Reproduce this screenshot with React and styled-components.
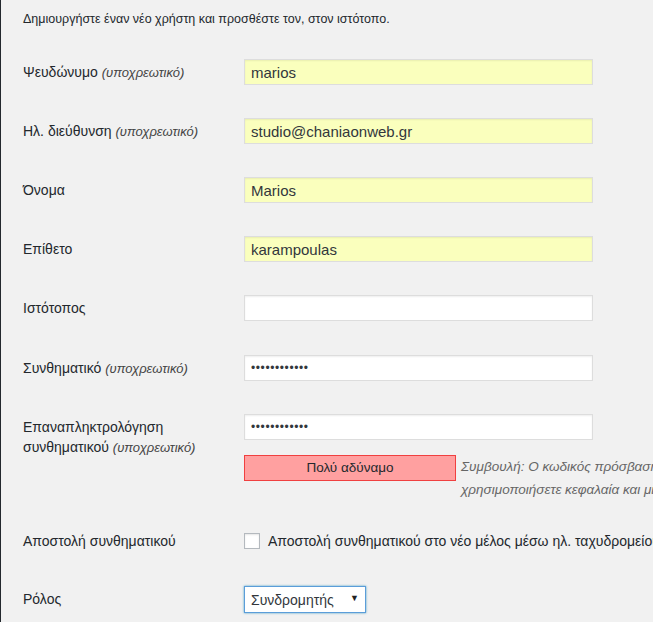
import React from 'react'
import styled, { createGlobalStyle } from 'styled-components'

const GlobalStyle = createGlobalStyle`
  html, body {
    margin: 0;
    padding: 0;
    overflow: hidden;
    background: #f1f1f1;
  }
  body {
    font-family: "Liberation Sans", Arial, sans-serif;
    color: #23282d;
  }
`

const Page = styled.div`
  min-height: 622px;
  border-left: 1px solid #23282d;
  padding-left: 22px;
  box-sizing: border-box;
`

const Intro = styled.p`
  margin: 0;
  padding-top: 10px;
  font-size: 12.5px;
  line-height: 19px;
  white-space: nowrap;
`

const Form = styled.div`
  margin-top: 13px;
`

const Row = styled.div`
  display: grid;
  grid-template-columns: 221px 1fr;
  align-items: start;
  padding-top: ${p => p.$top ?? 17}px;
  padding-bottom: ${p => p.$bottom ?? 16}px;
`

const Label = styled.div`
  font-size: 14px;
  line-height: ${p => (p.$multi ? '20px' : '26px')};
  padding-top: ${p => (p.$multi ? '3px' : '0')};
`

const Required = styled.span`
  font-size: 13px;
  line-height: 1;
  font-style: italic;
  color: #444;
`

const Field = styled.div`
  display: flex;
  flex-direction: column;
  min-width: 0;
`

const TextInput = styled.input`
  box-sizing: border-box;
  width: 349px;
  height: 26px;
  margin: 0;
  padding: 0 6px;
  border: 1px solid #ddd;
  box-shadow: inset 0 1px 2px rgba(0, 0, 0, 0.07);
  background: ${p => (p.$filled ? '#faffbd' : '#fff')};
  color: #32373c;
  font-family: inherit;
  font-size: ${p => (p.type === 'password' ? '12px' : '15px')};
  letter-spacing: ${p => (p.type === 'password' ? '0.6px' : '0')};
  outline: none;
`

const StrengthRow = styled.div`
  display: flex;
  align-items: flex-start;
  margin-top: 15px;
`

const Strength = styled.div`
  box-sizing: border-box;
  flex: none;
  width: 212px;
  height: 26px;
  line-height: 24px;
  text-align: center;
  font-size: 13.5px;
  background: #ffa0a0;
  border: 1px solid #f04040;
  color: #23282d;
`

const Hint = styled.p`
  margin: 0 0 0 5px;
  font-size: 13.5px;
  font-style: italic;
  line-height: 23px;
  color: #666;
  white-space: nowrap;
`

const CheckLine = styled.label`
  display: flex;
  align-items: center;
  gap: 8px;
  height: 26px;
  font-size: 14px;
  white-space: nowrap;
`

const Check = styled.input`
  appearance: none;
  flex: none;
  box-sizing: border-box;
  width: 16px;
  height: 16px;
  margin: 0;
  border: 1px solid #b4b9be;
  background: #fff;
  box-shadow: inset 0 1px 2px rgba(0, 0, 0, 0.1);
`

const SelectWrap = styled.div`
  position: relative;
  width: 122px;
  height: 27px;
`

const Select = styled.select`
  appearance: none;
  box-sizing: border-box;
  width: 100%;
  height: 100%;
  margin: 0;
  padding: 0 6px;
  border: 1px solid #5b9dd9;
  box-shadow: 0 0 2px rgba(30, 140, 190, 0.8);
  background: #fff;
  color: #32373c;
  font-family: inherit;
  font-size: 14px;
  outline: none;
`

const Arrow = styled.span`
  position: absolute;
  right: 7px;
  top: 7px;
  font-size: 9px;
  color: #222;
  pointer-events: none;
`

const fields = [
  { label: 'Ψευδώνυμο', required: true, value: 'marios' },
  { label: 'Ηλ. διεύθυνση', required: true, value: 'studio@chaniaonweb.gr' },
  { label: 'Όνομα', value: 'Marios' },
  { label: 'Επίθετο', value: 'karampoulas' },
  { label: 'Ιστότοπος', value: '' },
]

export default function App() {
  return (
    <>
      <GlobalStyle />
      <Page>
        <Intro>Δημιουργήστε έναν νέο χρήστη και προσθέστε τον, στον ιστότοπο.</Intro>
        <Form>
          {fields.map(f => (
            <Row key={f.label}>
              <Label>
                {f.label}
                {f.required && <> <Required>(υποχρεωτικό)</Required></>}
              </Label>
              <Field>
                <TextInput type="text" defaultValue={f.value} $filled={!!f.value} />
              </Field>
            </Row>
          ))}
          <Row $top={18}>
            <Label>
              Συνθηματικό <Required>(υποχρεωτικό)</Required>
            </Label>
            <Field>
              <TextInput type="password" defaultValue="abcdefghijkl" />
            </Field>
          </Row>
          <Row $bottom={10}>
            <Label $multi>
              Επαναπληκτρολόγηση
              <br />
              συνθηματικού <Required>(υποχρεωτικό)</Required>
            </Label>
            <Field>
              <TextInput type="password" defaultValue="abcdefghijkl" />
              <StrengthRow>
                <Strength>Πολύ αδύναμο</Strength>
                <Hint>
                  Συμβουλή: Ο κωδικός πρόσβασης θα πρέπει να είναι τουλάχιστον επτά χαρακτήρες. Για να τον κάνετε ισχυρότερο,
                  <br />
                  χρησιμοποιήσετε κεφαλαία και μικρά γράμματα, αριθμούς και σύμβολα όπως ! " ? $ % ^ &amp; ).
                </Hint>
              </StrengthRow>
            </Field>
          </Row>
          <Row $bottom={16}>
            <Label>Αποστολή συνθηματικού</Label>
            <Field>
              <CheckLine>
                <Check type="checkbox" />
                Αποστολή συνθηματικού στο νέο μέλος μέσω ηλ. ταχυδρομείου.
              </CheckLine>
            </Field>
          </Row>
          <Row $top={16}>
            <Label>Ρόλος</Label>
            <Field>
              <SelectWrap>
                <Select defaultValue="subscriber">
                  <option value="subscriber">Συνδρομητής</option>
                  <option value="editor">Συντάκτης</option>
                </Select>
                <Arrow>▼</Arrow>
              </SelectWrap>
            </Field>
          </Row>
        </Form>
      </Page>
    </>
  )
}
